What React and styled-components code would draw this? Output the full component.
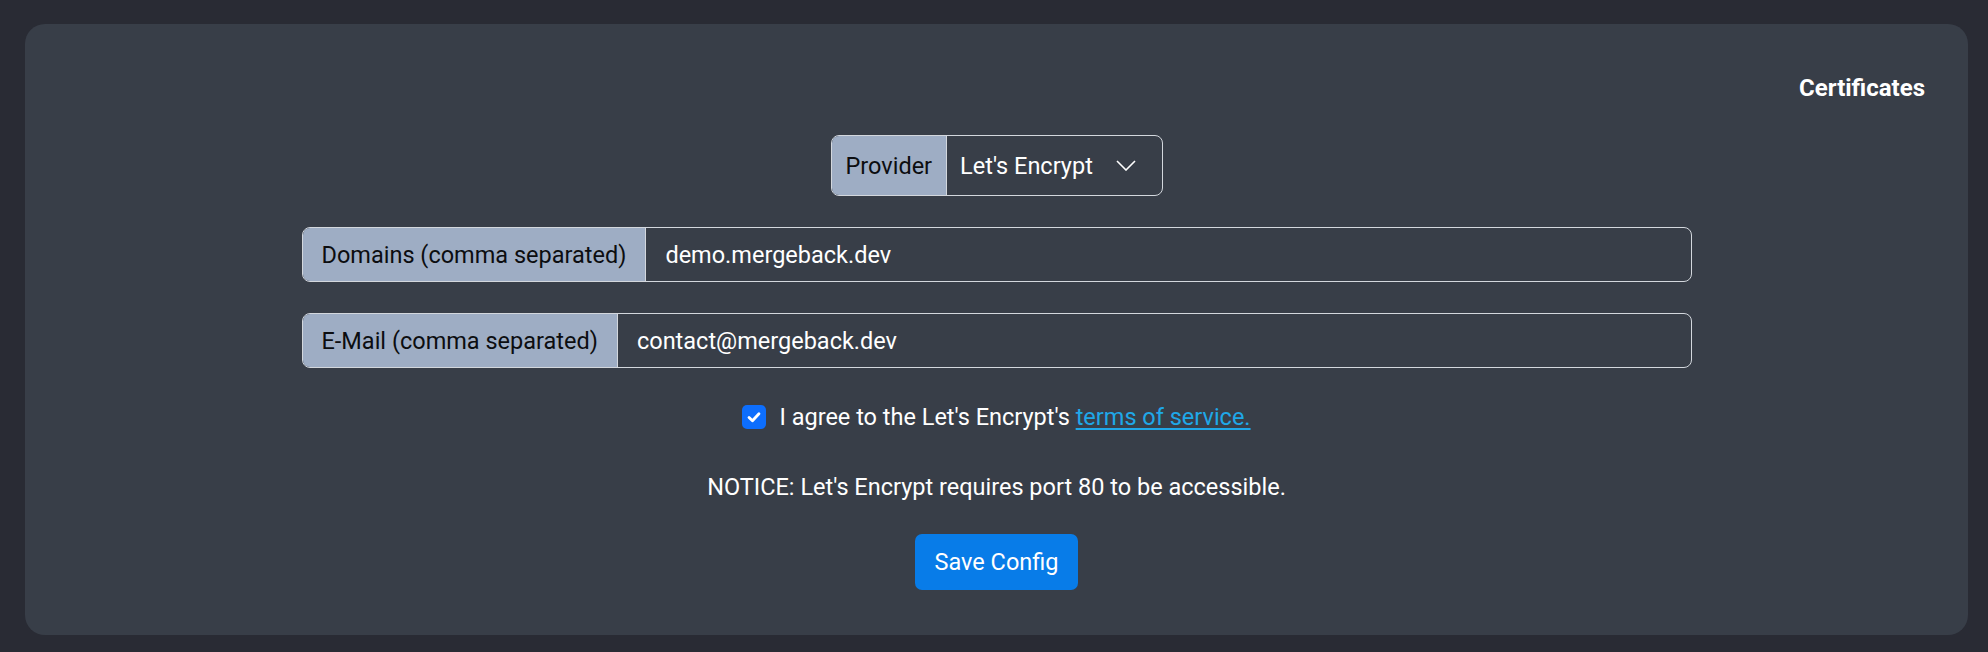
import React from "react";
import styled, { createGlobalStyle } from "styled-components";

const FONT = `Roboto, "Noto Sans", Arial, sans-serif`;
const FS = "23.5px";

const GlobalStyle = createGlobalStyle`
  html, body { margin: 0; padding: 0; background: #292b34; }
  body { font-family: ${FONT}; color: #fff; }
  * { box-sizing: border-box; }
`;

const Page = styled.div`
  padding: 24px 20px 17px 25px;
`;

const Card = styled.section`
  height: 611px;
  background: #383e48;
  border-radius: 20px;
  padding: 49px 43px 0 43px;
  display: flex;
  flex-direction: column;
  align-items: center;
`;

const Heading = styled.h2`
  align-self: stretch;
  margin: 0;
  text-align: right;
  font-size: 24px;
  font-weight: 700;
  line-height: 30px;
`;

const Group = styled.div`
  display: flex;
  align-items: stretch;
  width: ${(p) => p.$width};
  height: ${(p) => p.$height}px;
  margin-top: ${(p) => p.$top}px;
  border: 1px solid #d3d7dd;
  border-radius: 8px;
  overflow: hidden;
  font-size: ${FS};
`;

const Addon = styled.span`
  display: flex;
  align-items: center;
  padding: 0 ${(p) => p.$pad}px;
  background: #9eadc4;
  color: #0c0d10;
  border-right: 1px solid #d3d7dd;
  white-space: nowrap;
`;

const Field = styled.span`
  flex: 1;
  display: flex;
  align-items: center;
  padding: 0 ${(p) => p.$pad}px;
  color: #fff;
`;

const Chevron = styled.svg`
  margin-left: auto;
  margin-right: 13px;
`;

const AgreeRow = styled.label`
  display: flex;
  align-items: center;
  gap: 13px;
  height: 30px;
  margin-top: 34px;
  font-size: ${FS};
`;

const Box = styled.span`
  width: 24px;
  height: 24px;
  border-radius: 5px;
  background: #0d6efd;
  display: flex;
  align-items: center;
  justify-content: center;
`;

const Link = styled.a`
  color: #1fa8e8;
  text-decoration: underline;
  text-underline-offset: 3px;
`;

const Notice = styled.p`
  margin: 40px 0 0;
  line-height: 30px;
  font-size: ${FS};
`;

const SaveButton = styled.button`
  margin-top: 32px;
  height: 56px;
  padding: 0 20px;
  border: none;
  border-radius: 7px;
  background: #087ce8;
  color: #fff;
  font-family: ${FONT};
  font-size: ${FS};
`;

export default function App() {
  return (
    <>
      <GlobalStyle />
      <Page>
        <Card>
          <Heading>Certificates</Heading>
          <Group $width="332px" $height={61} $top={32}>
            <Addon $pad={14}>Provider</Addon>
            <Field $pad={13}>
              Let's Encrypt
              <Chevron width="20" height="11" viewBox="0 0 20 11" fill="none">
                <polyline points="1,1 10,10 19,1" stroke="#fff" strokeWidth="1.6" />
              </Chevron>
            </Field>
          </Group>
          <Group $width="1390px" $height={55} $top={31}>
            <Addon $pad={19}>Domains (comma separated)</Addon>
            <Field $pad={19}>demo.mergeback.dev</Field>
          </Group>
          <Group $width="1390px" $height={55} $top={31}>
            <Addon $pad={19}>E-Mail (comma separated)</Addon>
            <Field $pad={19}>contact@mergeback.dev</Field>
          </Group>
          <AgreeRow>
            <Box>
              <svg width="18" height="18" viewBox="0 0 20 20" fill="none">
                <path d="M4.5 10.5l3.8 3.6L15.5 6.5" stroke="#fff" strokeWidth="3.2" strokeLinecap="round" strokeLinejoin="round" />
              </svg>
            </Box>
            <span>
              I agree to the Let's Encrypt's <Link href="#">terms of service.</Link>
            </span>
          </AgreeRow>
          <Notice>NOTICE: Let's Encrypt requires port 80 to be accessible.</Notice>
          <SaveButton>Save Config</SaveButton>
        </Card>
      </Page>
    </>
  );
}
